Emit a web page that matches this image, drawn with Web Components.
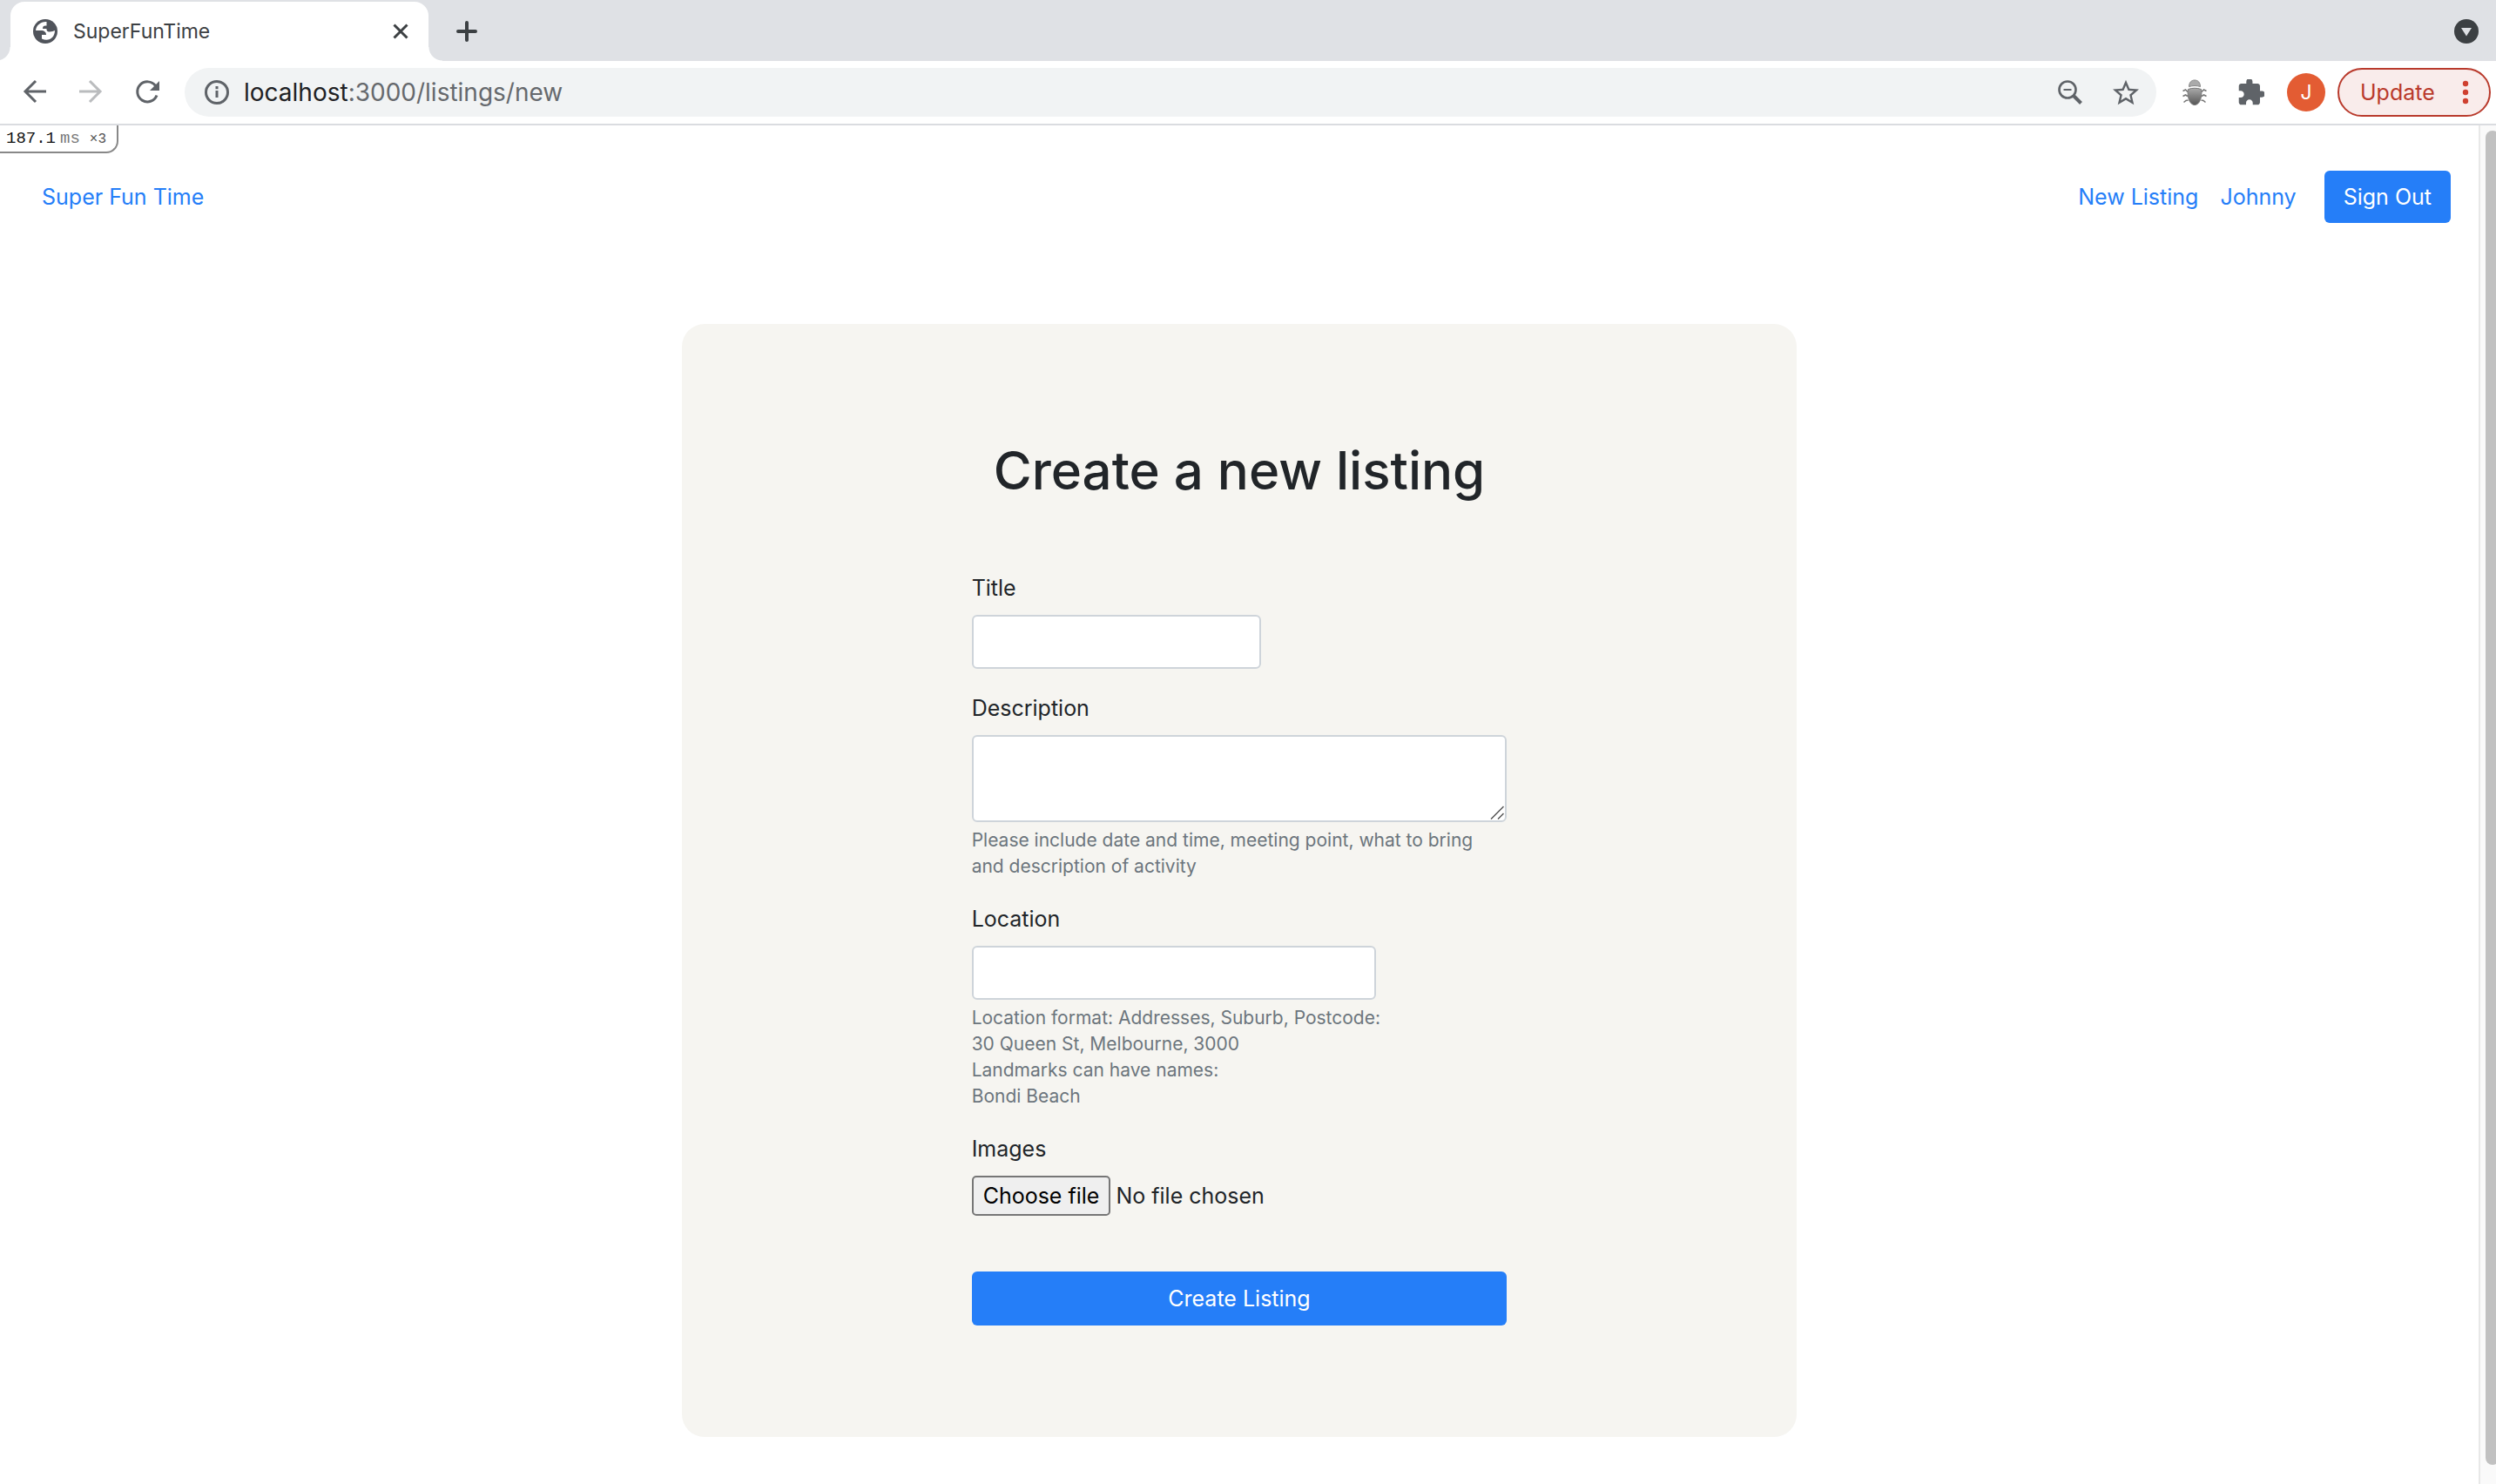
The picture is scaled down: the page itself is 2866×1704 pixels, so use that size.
<!DOCTYPE html>
<html lang="en">
<head>
<meta charset="utf-8">
<title>SuperFunTime</title>
<style>
  html, body { margin: 0; }
  body {
    font-family: Inter, "Liberation Sans", sans-serif;
    font-size: 25px;
    line-height: 38px;
    color: #212529;
    background: #fff;
    --blue: #257ef8;
    --ink: #5f6368;
    --field-border: #ced4da;
    --card: #f6f5f1;
  }
</style>
</head>
<body>
<browser-window>
  <browser-tabs slot="chrome" heading="SuperFunTime"></browser-tabs>
  <browser-toolbar slot="chrome"></browser-toolbar>
  <timing-badge slot="page"></timing-badge>
  <site-nav slot="page"></site-nav>
  <listing-card slot="page" heading="Create a new listing">
    <text-field label="Title" name="title" size="short"></text-field>
    <text-field label="Description" name="description" size="full" multiline>Please include date and time, meeting point, what to bring and description of activity</text-field>
    <text-field label="Location" name="location" size="medium">Location format: Addresses, Suburb, Postcode:<br>30 Queen St, Melbourne, 3000<br>Landmarks can have names:<br>Bondi Beach</text-field>
    <file-field label="Images"></file-field>
    <submit-button>Create Listing</submit-button>
  </listing-card>
</browser-window>

<script>
const base = ':host, *, *::before, *::after { box-sizing: border-box; } button, input, textarea { font: inherit; margin: 0; } button { cursor: pointer; } svg { display: block; flex: none; }';

class Base extends HTMLElement {
  connectedCallback() {
    if (this.shadowRoot) return;
    this.attachShadow({ mode: 'open' }).innerHTML = `<style>${base}${this.css()}</style>${this.html()}`;
  }
  attr(name) { return this.getAttribute(name) || ''; }
}

customElements.define('browser-window', class extends Base {
  css() { return `
    :host { display: flex; flex-direction: column; min-height: 100vh; }
    .view { display: flex; flex: 1; }
    main { flex: 1; min-width: 0; }
    .track { width: 20px; padding: 6px 0 22px 6px; overflow: hidden; display: flex; background: #fafafa; border-left: 2px solid #e8e8e8; }
    .thumb { flex: none; width: 16px; border-radius: 8px; background: #c1c1c1; }
  `; }
  html() { return `
    <slot name="chrome"></slot>
    <div class="view"><main><slot name="page"></slot></main><div class="track"><div class="thumb"></div></div></div>`; }
});

customElements.define('browser-tabs', class extends Base {
  css() { return `
    :host { display: flex; align-items: stretch; height: 70px; padding: 2px 20px 0 12px; background: #dfe1e5; color: #3c4043; }
    .tab { position: relative; display: flex; align-items: center; width: 480px; padding: 0 22px 0 26px; border-radius: 16px 16px 0 0; background: #fff; }
    .tab::before, .tab::after { content: ""; position: absolute; bottom: 0; width: 16px; height: 16px; }
    .tab::before { right: 100%; background: radial-gradient(circle at 0 0, transparent 15px, #fff 16px); }
    .tab::after { left: 100%; background: radial-gradient(circle at 100% 0, transparent 15px, #fff 16px); }
    .title { flex: 1; margin-left: 18px; font-size: 23px; }
    button { display: flex; padding: 0; border: 0; background: none; align-self: center; color: inherit; }
    .add { margin-left: 32px; }
    .menu { margin-left: auto; }
  `; }
  html() { return `
    <div class="tab">
      <svg width="28" height="28" viewBox="0 0 28 28"><circle cx="14" cy="14" r="14" fill="#50545b"/><path d="M15.500 3C9 2.500 3.500 7 3 13h6c4 0 6 2 6 5h-5v4.500C18 26.500 25 21 25 13c-2 .5-3 1.500-6 1.500-3 0-3.500-1.500-3.500-3.500H11c0-2.500 1-3.500 3-3.500h1.500z" fill="#fff"/></svg>
      <span class="title">${this.attr('heading')}</span>
      <button aria-label="Close tab"><svg width="20" height="20" viewBox="0 0 20 20" stroke="currentColor" stroke-width="3" fill="none"><path d="M2.500 2.500l15 15M17.500 2.500l-15 15"/></svg></button>
    </div>
    <button class="add" aria-label="New tab"><svg width="24" height="24" viewBox="0 0 24 24" stroke="currentColor" stroke-width="4" stroke-linecap="round"><path d="M2 12h20M12 2v20"/></svg></button>
    <button class="menu" aria-label="Search tabs"><svg width="28" height="28" viewBox="0 0 28 28"><circle cx="14" cy="14" r="14" fill="#3c4043"/><path d="M8 10h12l-6 9.500z" fill="#dfe1e5"/></svg></button>`; }
});

customElements.define('browser-toolbar', class extends Base {
  css() { return `
    :host { display: flex; align-items: center; height: 74px; padding: 0 6px 0 26px; border-bottom: 2px solid #dadce0; background: #fff; color: var(--ink); }
    button { display: flex; padding: 0; border: 0; background: none; color: inherit; }
    .nav { display: flex; gap: 36px; margin-right: 28px; }
    .off { color: #babcbe; }
    .address { flex: 1; display: flex; align-items: center; height: 56px; padding: 0 20px 0 22px; border-radius: 28px; background: #f1f3f4; }
    .url { flex: 1; margin-left: 16px; font-size: 28px; color: #66696d; }
    .url b { font-weight: 400; color: #202124; }
    .page-actions { display: flex; gap: 34px; }
    .extensions { display: flex; align-items: center; gap: 36px; margin: 0 14px 0 30px; }
    .avatar { justify-content: center; align-items: center; width: 44px; height: 44px; margin-left: -10px; border-radius: 50%; background: #e35c33; color: #fff; font-size: 23px; }
    .update { align-items: center; justify-content: space-between; width: 176px; height: 56px; padding: 0 22px 0 24px; border: 2px solid #b93a2c; border-radius: 28px; background: #f9eceb; color: #b93a2c; }
  `; }
  html() { return `
    <div class="nav">
      <button aria-label="Back"><svg width="28" height="28" viewBox="0 0 28 28" fill="none" stroke="currentColor" stroke-width="3"><path d="M27 14H3M15 2L3 14l12 12"/></svg></button>
      <button class="off" aria-label="Forward"><svg width="28" height="28" viewBox="0 0 28 28" fill="none" stroke="currentColor" stroke-width="3"><path d="M1 14h24M13 2l12 12-12 12"/></svg></button>
      <button aria-label="Reload"><svg width="30" height="30" viewBox="0 0 30 30" fill="none" stroke="currentColor" stroke-width="3"><path d="M24.500 7.500A11.500 11.500 0 1 0 26 18.500"/><path d="M29 2v11H18z" fill="currentColor" stroke="none"/></svg></button>
    </div>
    <div class="address">
      <svg width="30" height="30" viewBox="0 0 30 30" fill="none" stroke="currentColor" stroke-width="3"><circle cx="15" cy="15" r="12.500"/><path d="M15 13v8M15 8v3.200"/></svg>
      <span class="url"><b>localhost</b>:3000/listings/new</span>
      <div class="page-actions">
        <button aria-label="Zoom"><svg width="30" height="30" viewBox="0 0 30 30" fill="none" stroke="currentColor"><circle cx="12" cy="12" r="9.500" stroke-width="2.600"/><path d="M7.500 12h9" stroke-width="2"/><path d="M18.500 18.500l9 9" stroke-width="4"/></svg></button>
        <button aria-label="Bookmark"><svg width="30" height="30" viewBox="2 1.500 20 20" fill="currentColor"><path d="M22 9.240l-7.190-.62L12 2 9.190 8.630 2 9.240l5.460 4.730L5.820 21 12 17.270 18.180 21l-1.630-7.030L22 9.240zM12 15.400l-3.760 2.270 1-4.280-3.320-2.880 4.380-.38L12 6.100l1.710 4.040 4.380.38-3.320 2.880 1 4.280L12 15.400z"/></svg></button>
      </div>
    </div>
    <div class="extensions">
      <button aria-label="Debugger"><svg width="28" height="30" viewBox="0 0 28 30"><defs><linearGradient id="g" x2="0" y2="1"><stop stop-color="#aaa"/><stop offset="1" stop-color="#555"/></linearGradient></defs><g fill="none" stroke="#777" stroke-width="1.600"><path d="M6 14.500L3.500 12 .5 13.500M6 19.500L3.500 18l-3 1.500M6.500 24L4 24.500l-2.500 2M22 14.500l2.500-2.500 3 1.500M22 19.500l2.500-1.500 3 1.500M21.500 24l2.500.5 2.500 2"/></g><path d="M7.500 8.500C7.500 4 10 1 14 1s6.500 3 6.500 7.500c-4-1.300-9-1.300-13 0z" fill="#aaa" stroke="#888"/><path d="M6.500 11.500c5-1.700 10-1.700 15 0 1.500 8-1.500 18-7.500 18S5 19.500 6.500 11.500z" fill="url(#g)" stroke="#777"/></svg></button>
      <button aria-label="Extensions"><svg width="30" height="30" viewBox="1.500 1.500 21 21" fill="currentColor"><path d="M20.500 11H19V7c0-1.100-.9-2-2-2h-4V3.500a2.500 2.500 0 0 0-5 0V5H4c-1.100 0-1.990.9-1.990 2v3.800H3.500c1.490 0 2.700 1.210 2.700 2.700s-1.210 2.700-2.700 2.700H2V20c0 1.100.9 2 2 2h3.800v-1.500c0-1.490 1.210-2.700 2.700-2.700s2.700 1.210 2.700 2.700V22H17c1.100 0 2-.9 2-2v-4h1.500a2.500 2.500 0 0 0 0-5z"/></svg></button>
      <button class="avatar" aria-label="Profile">J</button>
    </div>
    <button class="update">Update <svg width="10" height="28" viewBox="0 0 10 28" fill="#cf4030"><circle cx="5" cy="4" r="3.200"/><circle cx="5" cy="14" r="3.200"/><circle cx="5" cy="24" r="3.200"/></svg></button>`; }
});

customElements.define('timing-badge', class extends Base {
  css() { return `
    :host { display: block; height: 0; }
    div { display: flex; align-items: baseline; width: 136px; height: 32px; padding-left: 7px; border: solid #888; border-width: 0 2px 2px 0; border-radius: 0 0 14px 0; background: #fff; font: 19px/30px "Liberation Mono", monospace; color: #111; }
    .unit { margin-left: 5px; color: #777; }
    .count { margin-left: 11px; font-size: 16px; color: #555; }
  `; }
  html() { return `<div><span>187.1</span><span class="unit">ms</span><span class="count">×3</span></div>`; }
});

customElements.define('site-nav', class extends Base {
  css() { return `
    :host { display: block; }
    nav { display: flex; align-items: center; padding: 52px 32px 52px 48px; }
    a { color: var(--blue); text-decoration: none; }
    .links { display: flex; align-items: center; gap: 25px; margin-left: auto; }
    button { height: 60px; margin-left: 7px; padding: 0 22px; border: 0; border-radius: 6px; background: var(--blue); color: #fff; }
  `; }
  html() { return `<nav><a href="#home">Super Fun Time</a><div class="links"><a href="#new">New Listing</a><a href="#me">Johnny</a><button>Sign Out</button></div></nav>`; }
});

customElements.define('listing-card', class extends Base {
  css() { return `
    :host { display: block; width: 45%; margin: 64px auto 54px; padding: 130px 0 128px; border-radius: 26px; background: var(--card); }
    h1 { margin: 0 0 78px; font-size: 60px; line-height: 76px; font-weight: 500; text-align: center; }
    form { width: 48%; margin: 0 auto; display: flex; flex-direction: column; gap: 26px; }
  `; }
  html() { return `<h1>${this.attr('heading')}</h1><form><slot></slot></form>`; }
});

customElements.define('text-field', class extends Base {
  css() { return `
    :host { display: block; }
    label { display: block; margin-bottom: 12px; }
    .box { position: relative; display: flex; }
    input, textarea { display: block; height: 62px; padding: 9px 18px; border: 2px solid var(--field-border); border-radius: 6px; background: #fff; color: inherit; outline: 0; }
    textarea { height: 100px; resize: vertical; }
    textarea::-webkit-resizer { background: none; }
    .short { width: 54%; }
    .medium { width: 464px; }
    .full { width: 100%; }
    .grip { position: absolute; right: 3px; bottom: 3px; pointer-events: none; }
    small { display: block; margin-top: 6px; font-size: 21px; line-height: 30px; color: #6c757d; }
  `; }
  html() {
    const size = this.attr('size'), name = this.attr('name');
    const control = this.hasAttribute('multiline')
      ? `<textarea id="${name}" name="${name}" class="${size}"></textarea><svg class="grip" width="16" height="16" viewBox="0 0 16 16" stroke="#555" stroke-width="1.500"><path d="M1 15.500L15.500 1M9 15.500l6.500-6.500"/></svg>`
      : `<input id="${name}" name="${name}" type="text" class="${size}">`;
    const help = this.textContent.trim() ? '<small><slot></slot></small>' : '';
    return `<label for="${name}">${this.attr('label')}</label><div class="box">${control}</div>${help}`;
  }
});

customElements.define('file-field', class extends Base {
  css() { return `
    :host { display: block; }
    label { display: block; margin-bottom: 12px; }
    .box { position: relative; display: flex; align-items: center; gap: 6px; }
    .pick { height: 46px; padding: 0 11px; line-height: 42px; border: 2px solid #767676; border-radius: 5px; background: #efefef; color: #000; }
    input { position: absolute; inset: 0; width: 100%; height: 100%; opacity: 0; }
  `; }
  html() { return `<label for="images">${this.attr('label')}</label>
    <div class="box"><span class="pick">Choose file</span><span>No file chosen</span><input id="images" type="file"></div>`; }
});

customElements.define('submit-button', class extends Base {
  css() { return `
    :host { display: block; margin-top: 38px; }
    button { width: 100%; height: 62px; border: 0; border-radius: 6px; background: var(--blue); color: #fff; }
  `; }
  html() { return `<button type="submit"><slot></slot></button>`; }
});
</script>
</body>
</html>
